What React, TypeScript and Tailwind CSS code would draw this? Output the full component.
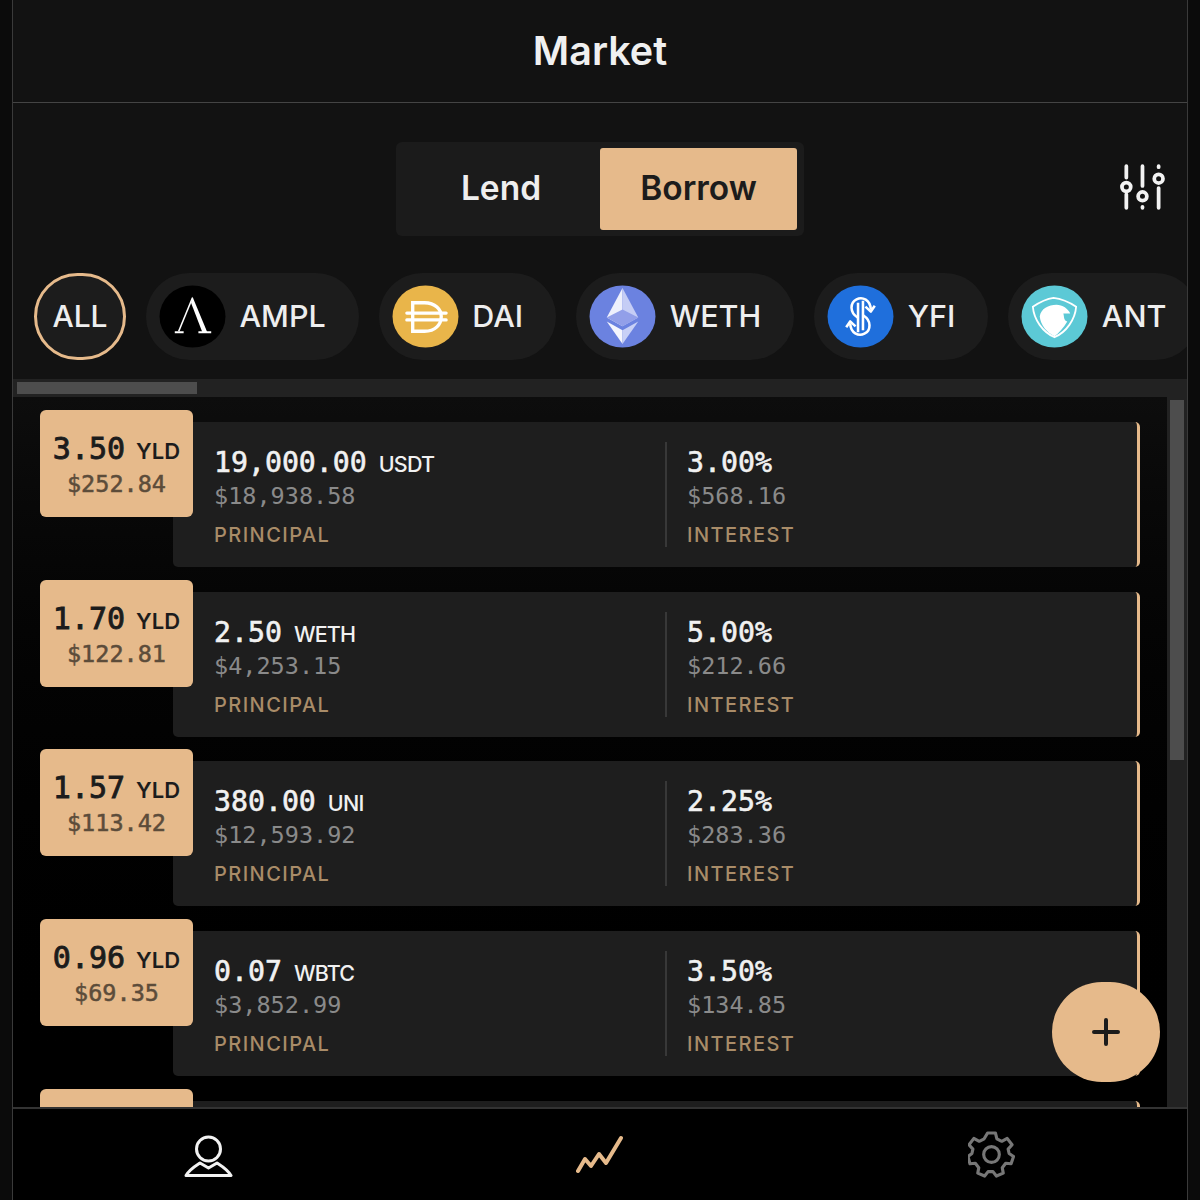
import React from "react";

const INTER = "font-['Inter',sans-serif]";
const MONO = "font-['DejaVu_Sans_Mono','Liberation_Mono',monospace]";

type Row = { y: string; yUsd: string; amt: string; sym: string; usd: string; rate: string; intr: string };
const rows: Row[] = [
  { y: "3.50", yUsd: "$252.84", amt: "19,000.00", sym: "USDT", usd: "$18,938.58", rate: "3.00%", intr: "$568.16" },
  { y: "1.70", yUsd: "$122.81", amt: "2.50", sym: "WETH", usd: "$4,253.15", rate: "5.00%", intr: "$212.66" },
  { y: "1.57", yUsd: "$113.42", amt: "380.00", sym: "UNI", usd: "$12,593.92", rate: "2.25%", intr: "$283.36" },
  { y: "0.96", yUsd: "$69.35", amt: "0.07", sym: "WBTC", usd: "$3,852.99", rate: "3.50%", intr: "$134.85" },
  { y: "0.82", yUsd: "$59.10", amt: "1.20", sym: "WETH", usd: "$2,041.51", rate: "2.75%", intr: "$56.14" },
];

function Ampl() {
  return (
    <svg viewBox="0 0 68 64" className="w-[67px] h-[63px] shrink-0">
      <ellipse cx="34" cy="32" rx="33.5" ry="31.5" fill="#000" />
      <path d="M34 13 L20 47" stroke="#fff" fill="none" strokeWidth="1.6" />
      <path d="M34 12 L49 48 L44 48 L32.5 18 Z" fill="#fff" />
      <path d="M16 48 H25 M40 48 H53" stroke="#fff" strokeWidth="1.8" />
    </svg>
  );
}

function Dai() {
  return (
    <svg viewBox="0 0 68 64" className="w-[67px] h-[63px] shrink-0">
      <ellipse cx="34" cy="32" rx="33.5" ry="31.5" fill="#e9b54a" />
      <path d="M21 18 H33 C44 18 50 25 50 32 C50 40 44 47 33 47 H21 Z" fill="none" stroke="#fff" strokeWidth="3.4" />
      <path d="M15 28.5 H55 M15 35.5 H55" stroke="#fff" strokeWidth="3.2" strokeLinecap="round" />
    </svg>
  );
}

function Weth() {
  return (
    <svg viewBox="0 0 68 64" className="w-[67px] h-[63px] shrink-0">
      <ellipse cx="34" cy="32" rx="33.5" ry="31.5" fill="#6b82e0" />
      <path d="M34 3 L18 33 L34 42 Z" fill="#eef0fc" />
      <path d="M34 3 L50 33 L34 42 Z" fill="#c5cdf5" />
      <path d="M18 33 L34 25 L50 33 L34 42 Z" fill="#929fe9" />
      <path d="M18 37 L34 46 L34 60 Z" fill="#f4f5fd" />
      <path d="M50 37 L34 46 L34 60 Z" fill="#c8d0f6" />
    </svg>
  );
}

function YfiHalf() {
  return (
    <g fill="none" stroke="#fff" strokeWidth="2.6" strokeLinejoin="round">
      <path d="M31 33 C23 28 23 18 30 14.5 C36 11.5 44 15 44.5 25" />
      <path d="M39 22 L44.5 27 L48.5 21" />
      <path d="M36.5 46 V16" />
    </g>
  );
}

function Yfi() {
  return (
    <svg viewBox="0 0 68 64" className="w-[67px] h-[63px] shrink-0">
      <ellipse cx="34" cy="32" rx="33.5" ry="31.5" fill="#1f6fdc" />
      <YfiHalf />
      <g transform="rotate(180 34 32)">
        <YfiHalf />
      </g>
    </svg>
  );
}

function Ant() {
  return (
    <svg viewBox="0 0 68 64" className="w-[67px] h-[63px] shrink-0">
      <ellipse cx="34" cy="32" rx="33.5" ry="31.5" fill="#5cc9d6" />
      <path d="M12 22 C18 18 26 14 33 13 C42 14 50 18 56 22 C55 35 46 48 34 53 C22 48 13 35 12 22 Z" fill="none" stroke="#fff" strokeWidth="1.8" />
      <path d="M19 32 C20 24 28 20 36 20 C42 20 48 24 50 29 L43 29 C44 32 43 36 47 37 C43 44 38 49 34 52 C26 48 20 41 19 32 Z" fill="#fff" />
    </svg>
  );
}

function Pill({ icon, label }: { icon: React.ReactNode; label: string }) {
  return (
    <div className="h-[87px] rounded-full bg-[#1c1c1c] flex items-center shrink-0 gap-[13.5px] pl-[13px] pr-[33px]">
      {icon}
      <span className="text-[30.5px] leading-none font-medium text-[#eeeeee]">{label}</span>
    </div>
  );
}

function Col({ main, sym, sub, label }: { main: string; sym?: string; sub: string; label: string }) {
  return (
    <>
      <div className="flex items-baseline gap-[12px] h-[37px] mt-[2px]">
        <span className={`${MONO} text-[28.2px] leading-[38px] font-normal [-webkit-text-stroke:0.6px_#f1f1f1] text-[#f1f1f1]`}>{main}</span>
        {sym && <span className="text-[21.5px] leading-none font-medium tracking-[-0.8px] text-[#f1f1f1]">{sym}</span>}
      </div>
      <span className={`${MONO} text-[23.5px] leading-[30px] text-[#8a8a8a]`}>{sub}</span>
      <span className="text-[20px] leading-[24px] mt-[12px] font-medium tracking-[1.45px] text-[#a98c68]">{label}</span>
    </>
  );
}

function Card({ r }: { r: Row }) {
  return (
    <div className="flex shrink-0 h-[157px]">
      <div className="w-[153px] h-[107px] shrink-0 z-10 rounded-[6px] bg-[#e6ba8b] flex flex-col items-center pt-[20px]">
        <div className="flex items-baseline gap-[11px] h-[38px]">
          <span className={`${MONO} text-[30px] leading-[38px] font-normal [-webkit-text-stroke:0.9px_#1c1c1c] text-[#1c1c1c]`}>{r.y}</span>
          <span className="text-[22px] leading-none font-semibold text-[#1c1c1c]">YLD</span>
        </div>
        <span className={`${MONO} text-[23.5px] leading-[30px] mt-[1px] font-normal [-webkit-text-stroke:0.5px_#5c4c3a] text-[#5c4c3a]`}>{r.yUsd}</span>
      </div>
      <div className="ml-[-20px] mt-[12px] w-[967px] h-[145px] bg-[#1e1e1e] rounded-[5px] border-r-[3px] border-[#e6ba8b] flex items-center">
        <div className="w-[494px] h-[105px] pl-[41px] border-r-[2px] border-[#383838] flex flex-col shrink-0">
          <Col main={r.amt} sym={r.sym} sub={r.usd} label="PRINCIPAL" />
        </div>
        <div className="pl-[20px] h-[105px] flex flex-col">
          <Col main={r.rate} sub={r.intr} label="INTEREST" />
        </div>
      </div>
    </div>
  );
}

export default function App() {
  return (
    <div className={`${INTER} w-[1200px] h-[1200px] bg-[#0b0b0b] overflow-hidden pl-[12px]`}>
      <div className="relative w-[1176px] h-[1200px] border-x border-[#3a3a3a] bg-[#121212] flex flex-col overflow-hidden">
        <header className="h-[103px] shrink-0 border-b border-[#444444] flex items-center justify-center">
          <span className="text-[39.5px] leading-none font-semibold text-[#f0f0f0] pt-[2px]">Market</span>
        </header>

        <div className="relative h-[170px] shrink-0 flex items-start justify-center pt-[39px]">
          <div className="w-[408px] h-[94px] rounded-[6px] bg-[#1b1b1b] flex p-[6px] pr-[7px]">
            <div className="w-[198px] flex items-center justify-center text-[33.5px] leading-none pb-[1px] font-semibold text-[#eeeeee]">Lend</div>
            <div className="w-[197px] rounded-[3px] bg-[#e6ba8b] flex items-center justify-center text-[33.5px] leading-none pb-[1px] font-semibold text-[#1c1c1c]">Borrow</div>
          </div>
          <svg viewBox="0 0 48 48" className="absolute right-[19px] top-[60px] w-[50px] h-[50px]" fill="none" stroke="#f2f2f2" strokeWidth="3.6" strokeLinecap="round">
            <path d="M8 3 V14 M8 30 V43 M23.5 3 V22 M23.5 42 V43 M39 3 V4 M39 24 V43" />
            <circle cx="8" cy="23" r="4.2" />
            <circle cx="23.5" cy="32" r="4.2" />
            <circle cx="39" cy="15" r="4.2" />
          </svg>
        </div>

        <div className="h-[87px] shrink-0 pl-[21px] flex gap-[20px] overflow-hidden">
          <div className="w-[92px] h-[87px] shrink-0 rounded-full border-[3px] border-[#e6ba8b] bg-[#1c1c1c] flex items-center justify-center text-[30px] font-medium text-[#eeeeee]">ALL</div>
          <Pill icon={<Ampl />} label="AMPL" />
          <Pill icon={<Dai />} label="DAI" />
          <Pill icon={<Weth />} label="WETH" />
          <Pill icon={<Yfi />} label="YFI" />
          <Pill icon={<Ant />} label="ANT" />
        </div>

        <div className="h-[18px] mt-[19px] shrink-0 bg-[#222222] pl-[4px] pt-[3px]">
          <div className="w-[180px] h-[12px] bg-[#4d4d4d]" />
        </div>

        <div className="flex-1 min-h-0 flex overflow-hidden">
          <div className="w-[1154px] shrink-0 bg-gradient-to-b from-[#0d0d0d] to-[#000000] pl-[27px] pt-[13px] flex flex-col gap-[12.7px] overflow-hidden">
            {rows.map((r) => (
              <Card key={r.y} r={r} />
            ))}
          </div>
          <div className="flex-1 bg-[#222222] pt-[3px] px-[3px]">
            <div className="h-[360px] bg-[#4d4d4d]" />
          </div>
        </div>

        <nav className="h-[93px] shrink-0 bg-black border-t-[2px] border-[#333333] grid grid-cols-3 items-center justify-items-center">
          <svg viewBox="0 0 49 46" className="w-[49px] h-[46px] ml-[-1px]" fill="none" stroke="#f2f2f2" strokeWidth="3" strokeLinejoin="round">
            <circle cx="24.5" cy="17" r="12" />
            <path d="M2 43.5 C6 37 13 33 16 31 L24.5 36 L33 31 C36 33 43 37 47 43.5 Z" />
          </svg>
          <svg viewBox="0 0 48 40" className="w-[48px] h-[40px]" fill="none" stroke="#e6ba8b" strokeWidth="4" strokeLinecap="round" strokeLinejoin="round">
            <path d="M2 36 L9 24 L15 31 L23 19 L30 28 L45 3" />
          </svg>
          <svg viewBox="-1 0 48 48" className="w-[47px] h-[47px]" fill="none" stroke="#777777" strokeWidth="3.2" strokeLinejoin="round">
            <circle cx="23" cy="24" r="8" />
            <path d="M19 2 H27 L28.5 8 L33.5 10.5 L39 7.5 L44 14 L40 18.5 L41 23 L45.5 26 L43 33.5 L37.5 33 L34 37.5 L35 43 L28 46 L24.5 41.5 L19.5 41.5 L16 46 L9 43 L10 37.5 L6.5 33 L1 33.5 L-1 26 L3 23 L4 18.5 L0 14 L5 7.5 L10.5 10.5 L15.5 8 Z" />
          </svg>
        </nav>

        <button className="absolute left-[1039px] top-[982px] w-[108px] h-[100px] rounded-full bg-[#e6ba8b] flex items-center justify-center">
          <svg viewBox="0 0 28 28" className="w-[28px] h-[28px]" fill="none" stroke="#1c1c1c" strokeWidth="4" strokeLinecap="round">
            <path d="M14 2 V26 M2 14 H26" />
          </svg>
        </button>
      </div>
    </div>
  );
}
